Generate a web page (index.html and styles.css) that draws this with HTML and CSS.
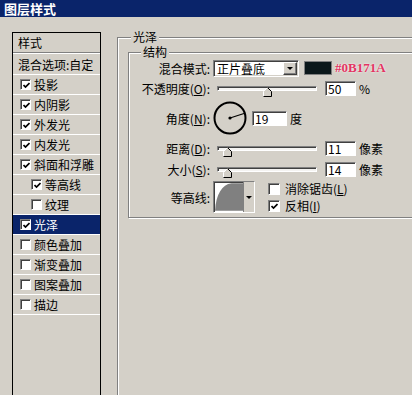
FILE: index.html
```html
<!DOCTYPE html>
<html lang="zh-CN">
<head>
  <meta charset="UTF-8" />
  <title>图层样式</title>
  <link rel="stylesheet" href="styles.css">
</head>
<body>
<div class="window">
  <div class="titlebar">图层样式</div>

  <div class="main">
    <!-- 左侧样式列表 -->
    <ul class="style-list">
      <li class="list-head">样式</li>
      <li class="blend">混合选项:自定</li>
      <li><span class="check"><svg viewBox="0 0 7 7"><polyline points="0.5,3 2.5,5 6.5,1"/></svg></span>投影</li>
      <li><span class="check"><svg viewBox="0 0 7 7"><polyline points="0.5,3 2.5,5 6.5,1"/></svg></span>内阴影</li>
      <li><span class="check"><svg viewBox="0 0 7 7"><polyline points="0.5,3 2.5,5 6.5,1"/></svg></span>外发光</li>
      <li><span class="check"><svg viewBox="0 0 7 7"><polyline points="0.5,3 2.5,5 6.5,1"/></svg></span>内发光</li>
      <li><span class="check"><svg viewBox="0 0 7 7"><polyline points="0.5,3 2.5,5 6.5,1"/></svg></span>斜面和浮雕</li>
      <li class="sub"><span class="check"><svg viewBox="0 0 7 7"><polyline points="0.5,3 2.5,5 6.5,1"/></svg></span>等高线</li>
      <li class="sub"><span class="check"></span>纹理</li>
      <li class="selected"><span class="check"><svg viewBox="0 0 7 7"><polyline points="0.5,3 2.5,5 6.5,1"/></svg></span>光泽</li>
      <li><span class="check"></span>颜色叠加</li>
      <li><span class="check"></span>渐变叠加</li>
      <li><span class="check"></span>图案叠加</li>
      <li><span class="check"></span>描边</li>
    </ul>

    <!-- 右侧选项 -->
    <div class="options">
      <fieldset class="group outer">
        <legend>光泽</legend>
        <fieldset class="group inner">
          <legend>结构</legend>
          <div class="form">
            <label>混合模式:</label>
            <div class="ctrl">
              <div class="select">正片叠底<span class="drop-btn"><i class="tri"></i></span></div>
              <span class="swatch"></span>
              <span class="hex">#0B171A</span>
            </div>

            <label>不透明度(<u>O</u>):</label>
            <div class="ctrl">
              <div class="slider">
                <span class="thumb" style="left: 45px;"><svg viewBox="0 0 9 10" width="9" height="10"><polygon points="4.5,0.5 8.5,4.5 8.5,9.5 0.5,9.5 0.5,4.5" fill="#d4d0c8"/><polyline points="0.5,9.5 0.5,4.5 4.5,0.5" fill="none" stroke="#fff"/><polyline points="4.5,0.5 8.5,4.5 8.5,9.5 0.5,9.5" fill="none" stroke="#000"/></svg></span>
              </div>
              <input class="field" type="text" value="50" readonly>
              <span class="unit">%</span>
            </div>

            <label>角度(<u>N</u>):</label>
            <div class="ctrl">
              <svg class="dial" viewBox="0 0 34 34" width="34" height="34">
                <circle cx="17" cy="17" r="15.5" fill="none" stroke="#000" stroke-width="2"/>
                <line x1="17" y1="17" x2="31" y2="12.5" stroke="#000" stroke-width="1.2"/>
                <circle cx="17" cy="17" r="1.6" fill="#000"/>
              </svg>
              <input class="field angle" type="text" value="19" readonly>
              <span class="unit">度</span>
            </div>

            <label>距离(<u>D</u>):</label>
            <div class="ctrl">
              <div class="slider">
                <span class="thumb" style="left: 5px;"><svg viewBox="0 0 9 10" width="9" height="10"><polygon points="4.5,0.5 8.5,4.5 8.5,9.5 0.5,9.5 0.5,4.5" fill="#d4d0c8"/><polyline points="0.5,9.5 0.5,4.5 4.5,0.5" fill="none" stroke="#fff"/><polyline points="4.5,0.5 8.5,4.5 8.5,9.5 0.5,9.5" fill="none" stroke="#000"/></svg></span>
              </div>
              <input class="field" type="text" value="11" readonly>
              <span class="unit">像素</span>
            </div>

            <label>大小(<u>S</u>):</label>
            <div class="ctrl">
              <div class="slider">
                <span class="thumb" style="left: 5px;"><svg viewBox="0 0 9 10" width="9" height="10"><polygon points="4.5,0.5 8.5,4.5 8.5,9.5 0.5,9.5 0.5,4.5" fill="#d4d0c8"/><polyline points="0.5,9.5 0.5,4.5 4.5,0.5" fill="none" stroke="#fff"/><polyline points="4.5,0.5 8.5,4.5 8.5,9.5 0.5,9.5" fill="none" stroke="#000"/></svg></span>
              </div>
              <input class="field" type="text" value="14" readonly>
              <span class="unit">像素</span>
            </div>

            <label>等高线:</label>
            <div class="ctrl">
              <div class="contour">
                <svg viewBox="0 0 29 28" width="29" height="28">
                  <path d="M0 28 C1 12 7 1 17 0 L29 0 L29 28 Z" fill="#808080"/>
                </svg>
                <span class="contour-btn"><i class="tri"></i></span>
              </div>
              <div class="checks">
                <div class="opt"><span class="check big"></span>消除锯齿(<u>L</u>)</div>
                <div class="opt"><span class="check big"><svg viewBox="0 0 7 7"><polyline points="0.5,3 2.5,5 6.5,1"/></svg></span>反相(<u>I</u>)</div>
              </div>
            </div>
          </div>
        </fieldset>
      </fieldset>
    </div>
  </div>
</div>
</body>
</html>
```

FILE: styles.css
```css
body {
  margin: 0;
  background-color: #d4d0c8;
  font-family: "Noto Sans CJK SC", "Noto Sans", sans-serif;
  font-size: 12px;
  color: #000;
  overflow: hidden;
}
.window {
  width: 412px;
  height: 395px;
  overflow: hidden;
}
.titlebar {
  height: 17px;
  line-height: 17px;
  padding-left: 4px;
  background-color: #0a246a;
  color: white;
  font-size: 13px;
  font-weight: bold;
}
.main {
  display: flex;
  padding-left: 12px;
  height: 378px;
}

/* 样式列表 */
.style-list {
  list-style: none;
  margin: 15px 0 0;
  padding: 0;
  width: 89px;
  box-sizing: border-box;
  border: 1px solid #000;
  border-bottom: none;
  flex: none;
}
.style-list li {
  display: flex;
  align-items: center;
  height: 19px;
  padding-left: 7px;
  border-bottom: 1px solid #fff;
  white-space: nowrap;
}
.style-list .list-head {
  padding-left: 5px;
  border-bottom: 1px solid #808080;
  box-shadow: 0 1px 0 #fff;
  margin-bottom: 1px;
}
.style-list .blend {
  height: 20px;
  padding-left: 5px;
}
.style-list .sub {
  padding-left: 18px;
}
.style-list .selected {
  background-color: #0a246a;
  color: white;
}
.check {
  display: flex;
  align-items: center;
  justify-content: center;
  width: 11px;
  height: 11px;
  box-sizing: border-box;
  margin-right: 3px;
  background: #fff;
  border: 1px solid;
  border-color: #808080 #fff #fff #808080;
  box-shadow: inset 1px 1px 0 #404040;
  flex: none;
}
.check svg {
  width: 7px;
  height: 7px;
  margin: 1px 0 0 1px;
}
.check polyline {
  fill: none;
  stroke: #000;
  stroke-width: 1.7;
}
.check.big {
  width: 12px;
  height: 12px;
  margin-right: 5px;
}

/* 右侧分组 */
.options {
  margin: 13px 0 0 16px;
  width: 330px;
  flex: none;
}
.group {
  margin: 0;
  border: 1px solid #808080;
  box-shadow: inset 1px 1px 0 #fff, 1px 1px 0 #fff;
}
.group legend {
  padding: 0 2px;
  line-height: 14px;
  background-color: #d4d0c8;
}
.outer {
  padding: 1px 0 0 10px;
  min-height: 400px;
}
.outer > legend {
  margin-left: 3px;
}
.inner {
  padding: 0 0 2px 6px;
}
.inner > legend {
  margin-left: 6px;
}
.form {
  display: grid;
  grid-template-columns: 75px auto;
  grid-template-rows: 18px 22px 38px 22px 20px 36px;
  column-gap: 3px;
  align-items: center;
}
.form label {
  justify-self: end;
  white-space: nowrap;
}
.ctrl {
  display: flex;
  align-items: center;
}

.select {
  display: flex;
  align-items: center;
  justify-content: space-between;
  width: 86px;
  height: 17px;
  box-sizing: border-box;
  padding: 0 1px 0 3px;
  margin-right: 5px;
  background: #fff;
  border: 1px solid;
  border-color: #808080 #fff #fff #808080;
  box-shadow: inset 1px 1px 0 #404040, inset -1px -1px 0 #d4d0c8;
}
.drop-btn {
  display: flex;
  align-items: center;
  justify-content: center;
  width: 14px;
  height: 13px;
  box-sizing: border-box;
  background: #d4d0c8;
  border: 1px solid;
  border-color: #fff #404040 #404040 #fff;
  box-shadow: inset -1px -1px 0 #808080;
}
.tri {
  width: 0;
  height: 0;
  border-left: 3px solid transparent;
  border-right: 3px solid transparent;
  border-top: 3px solid #000;
}
.swatch {
  width: 28px;
  height: 14px;
  box-sizing: border-box;
  margin-right: 3px;
  background-color: #0b171a;
  border: 1px solid #808080;
}
.hex {
  font-family: "Liberation Serif", serif;
  font-weight: bold;
  font-size: 13px;
  color: #e33462;
  text-shadow: 0 0 2px #fff;
}

.slider {
  position: relative;
  width: 100px;
  height: 5px;
  box-sizing: border-box;
  margin: 0 8px 0 4px;
  background: #f4f3f1;
  border: 1px solid;
  border-color: #808080 #fff #fff #808080;
  box-shadow: inset 1px 1px 0 #404040;
}
.thumb {
  position: absolute;
  top: 0;
  width: 9px;
  height: 10px;
}
.thumb svg {
  display: block;
}
.field {
  width: 31px;
  height: 15px;
  box-sizing: border-box;
  padding: 0 2px;
  margin: 0;
  font: inherit;
  font-size: 12px;
  line-height: 11px;
  background: #fff;
  border: 1px solid;
  border-color: #808080 #fff #fff #808080;
  box-shadow: inset 1px 1px 0 #404040;
  outline: none;
}
.field.angle {
  width: 35px;
}
.unit {
  margin-left: 3px;
}
.dial {
  margin-right: 5px;
}

.contour {
  display: flex;
  width: 42px;
  height: 32px;
  box-sizing: border-box;
  margin-right: 13px;
  background: #fff;
  border: 1px solid;
  border-color: #808080 #fff #fff #808080;
  box-shadow: inset 1px 1px 0 #404040;
  padding: 1px 0 0 1px;
}
.contour svg {
  display: block;
}
.contour-btn {
  display: flex;
  align-items: center;
  justify-content: center;
  width: 10px;
  background: #d4d0c8;
  border-left: 1px solid #808080;
  margin-top: -1px;
}
.checks {
  display: flex;
  flex-direction: column;
}
.opt {
  display: flex;
  align-items: center;
  height: 17px;
  line-height: 17px;
  white-space: nowrap;
}
```
